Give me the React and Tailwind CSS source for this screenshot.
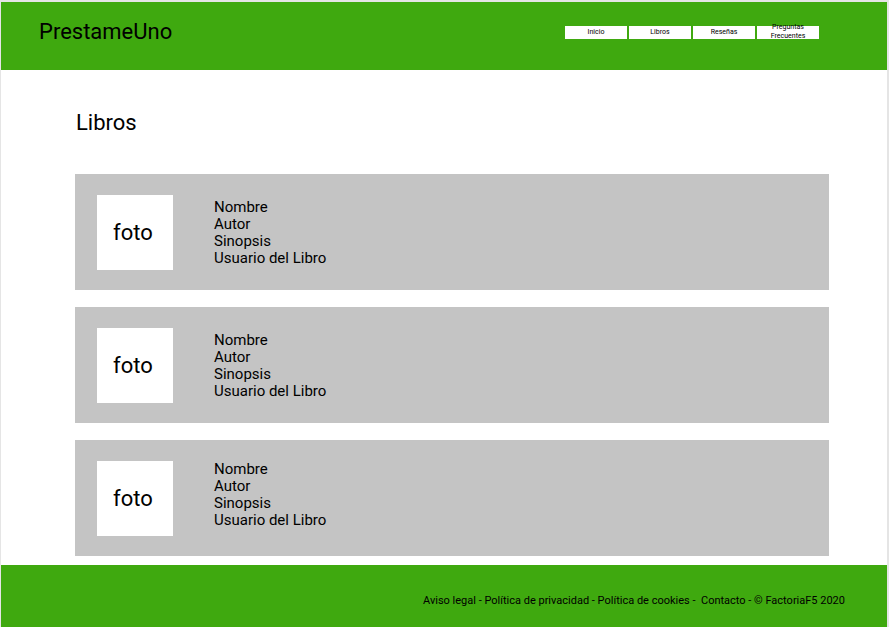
const navItems = ["Inicio", "Libros", "Reseñas", "Preguntas Frecuentes"];

const books = [
  { id: 1, align: "self-center" },
  { id: 2, align: "self-center" },
  { id: 3, align: "self-start" },
];

function Header() {
  return (
    <header className="flex items-center justify-between bg-[#3fa90f] pt-4 pb-6 pl-[38px] pr-[68px]">
      <div className="text-[22px] leading-7">PrestameUno</div>
      <nav className="flex gap-[2px]">
        {navItems.map((item) => (
          <button
            key={item}
            type="button"
            className="flex h-[13px] w-[62px] items-center justify-center bg-white px-1 text-center text-[7px] leading-[9px]"
          >
            {item}
          </button>
        ))}
      </nav>
    </header>
  );
}

function BookCard({ align }) {
  return (
    <li className="flex bg-[#c4c4c4] px-[22px] pt-[21px] pb-5">
      <div className="flex h-[75px] w-[76px] items-center bg-white pl-4 text-[22px] leading-7">
        foto
      </div>
      <div className={`ml-[41px] text-[15px] leading-[17px] ${align}`}>
        <p>Nombre</p>
        <p>Autor</p>
        <p>Sinopsis</p>
        <p>Usuario del Libro</p>
      </div>
    </li>
  );
}

function Footer() {
  return (
    <footer className="grow bg-[#3fa90f] pt-7 pr-[42px] pb-4 text-right text-[11px] leading-4 whitespace-pre">
      <a href="#aviso">Aviso legal</a> - <a href="#privacidad">Política de privacidad</a> -{" "}
      <a href="#cookies">Política de cookies</a> -{"  "}
      <a href="#contacto">Contacto</a> - © FactoriaF5 2020
    </footer>
  );
}

export default function App() {
  return (
    <div className="flex min-h-screen flex-col bg-[#e5e5e5] pt-[2px] pr-[2px] pl-px font-['Roboto',sans-serif] text-black">
      <Header />
      <main className="bg-white pt-[39px] pr-[58px] pb-[9px] pl-[74px]">
        <h1 className="pl-px text-[22px] leading-7">Libros</h1>
        <ul className="mt-[37px] flex flex-col gap-[17px]">
          {books.map((book) => (
            <BookCard key={book.id} align={book.align} />
          ))}
        </ul>
      </main>
      <Footer />
    </div>
  );
}
